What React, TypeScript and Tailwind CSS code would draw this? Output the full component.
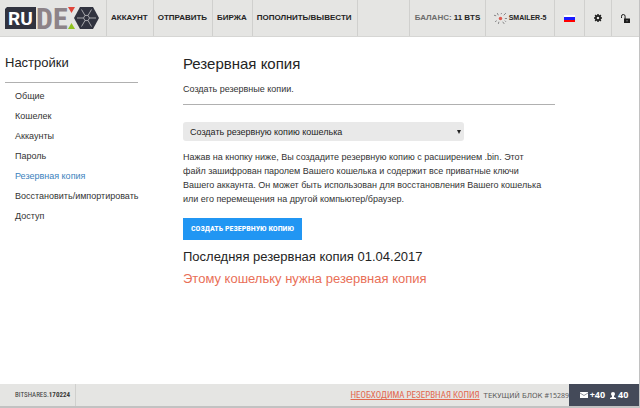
import { useState } from "react";

const NAV_LINKS = ["АККАУНТ", "ОТПРАВИТЬ", "БИРЖА", "ПОПОЛНИТЬ/ВЫВЕСТИ"];

const SETTINGS = [
  "Общие",
  "Кошелек",
  "Аккаунты",
  "Пароль",
  "Резервная копия",
  "Восстановить/импортировать",
  "Доступ",
];

function Logo() {
  return (
    <svg className="overflow-visible" width="94" height="24" viewBox="0 0 94 24" role="img" aria-label="RUDEX">
      <path d="M2 1h29v22H0V3z" fill="#31333f" />
      <text x="3" y="19" fontFamily="Roboto, sans-serif" fontWeight="700" fontSize="19" fill="#fff">
        RU
      </text>
      <text
        x="31"
        y="23"
        fontFamily="'Roboto Condensed', 'Liberation Sans Narrow', sans-serif"
        fontWeight="700"
        fontSize="30"
        fill="#8d8388"
      >
        DE
      </text>
      <path d="M63 1h7l-3.500 6z" fill="#e0453a" />
      <path d="M63 23h7l-3.500-6z" fill="#8fc31f" />
      <path d="M69 12l6-11h13l6 11-6 11H75z" fill="#31333f" />
      <g stroke="#b4b4b8" strokeWidth=".9" fill="none">
        <path d="M72 12h6.500M84.500 12h6.500M76.500 3.500l3.500 6M86.500 3.500l-3.500 6M76.500 20.500l3.500-6M86.500 20.500l-3.500-6" />
        <path d="M80 9.400h3l1.500 2.600-1.500 2.600h-3l-1.500-2.600z" />
      </g>
    </svg>
  );
}

function Avatar() {
  return (
    <svg width="13" height="13" viewBox="0 0 12 12" aria-hidden="true">
      <circle cx="6" cy="6" r="1.600" fill="#dd5a50" />
      <g stroke="#77777a" strokeWidth=".8">
        <path d="M3 1l1 2M7 1l-.5 1M11 1L9 3M0 3l2 .5M12 6h-2M1 9l1.500-1M4 11l.5-2M8 9l1.500 2M10 8l1 1" />
      </g>
    </svg>
  );
}

function Gear() {
  return (
    <svg width="8" height="8" viewBox="0 0 16 16" aria-hidden="true">
      <circle cx="8" cy="8" r="4.300" fill="none" stroke="#1c1c1c" strokeWidth="3.400" />
      <path
        d="M8 0v3M8 13v3M0 8h3M13 8h3M2.300 2.300l2.200 2.200M11.500 11.500l2.200 2.200M2.300 13.700l2.200-2.200M11.500 4.500l2.200-2.200"
        stroke="#1c1c1c"
        strokeWidth="3"
      />
    </svg>
  );
}

function Unlock() {
  return (
    <svg width="9" height="9" viewBox="0 0 9 9" aria-hidden="true">
      <path d="M.5 4V2.300a1.800 1.800 0 0 1 3.600 0V5" fill="none" stroke="#1c1c1c" strokeWidth="1" />
      <path d="M3 4.500h6V9H3z" fill="#1c1c1c" />
      <path d="M6 6v1.500" stroke="#85858a" strokeWidth="1" />
    </svg>
  );
}

function Flag() {
  return (
    <svg width="11" height="7" viewBox="0 0 11 7" aria-hidden="true">
      <path d="M0 0h11v2H0z" fill="#fff" />
      <path d="M0 2h11v3H0z" fill="#1a1aff" />
      <path d="M0 5h11v2H0z" fill="#f00" />
    </svg>
  );
}

function Header() {
  return (
    <header className="flex h-[37px] border-b border-[#d6d6d4] bg-[#e5e5e3] text-[8px] font-bold text-[#242424]">
      <a href="#home" className="flex w-[107px] items-center border-r border-[#d0d0ce] pl-[5px]">
        <Logo />
      </a>
      <nav className="flex">
        {NAV_LINKS.map((label) => (
          <a key={label} href="#nav" className="flex items-center border-r border-[#d0d0ce] pl-1 pr-[5px]">
            {label}
          </a>
        ))}
      </nav>
      <div className="ml-auto flex">
        <div className="flex w-[77px] items-center justify-center gap-[2px] whitespace-nowrap border-x border-[#d0d0ce]">
          <span className="text-[#6c6c6c]">БАЛАНС:</span>
          <span>11 BTS</span>
        </div>
        <button className="flex w-[69px] items-center justify-center gap-[2px] whitespace-nowrap border-r border-[#d0d0ce] text-[7px]">
          <Avatar />
          SMAILER-5
        </button>
        <button aria-label="Язык" className="flex w-[30px] items-center justify-center border-r border-[#d0d0ce]">
          <Flag />
        </button>
        <button aria-label="Настройки" className="flex w-[27px] items-center justify-center border-r border-[#d0d0ce]">
          <Gear />
        </button>
        <button aria-label="Разблокировать" className="flex w-[27px] items-center justify-center">
          <Unlock />
        </button>
      </div>
    </header>
  );
}

function Sidebar({ active, onSelect }: { active: string; onSelect: (name: string) => void }) {
  return (
    <aside className="w-[133px] shrink-0 pt-4">
      <h2 className="text-[13px] leading-5">Настройки</h2>
      <hr className="mt-[9px] border-[#b0b0b0]" />
      <ul className="mt-[3px] pl-[10px] text-[9px] leading-5">
        {SETTINGS.map((name) => (
          <li key={name}>
            <a
              href="#settings"
              onClick={() => onSelect(name)}
              className={`block whitespace-nowrap ${name === active ? "text-[#3b82bd]" : "text-[#333333]"}`}
            >
              {name}
            </a>
          </li>
        ))}
      </ul>
    </aside>
  );
}

function Backup() {
  return (
    <main className="ml-[45px] mr-[84px] flex-1 pt-[15px]">
      <h1 className="text-[15px] leading-6">Резервная копия</h1>
      <p className="mt-[6px] text-[9px] leading-[14px] text-[#333333]">Создать резервные копии.</p>
      <hr className="mt-2 border-[#b0b0b0]" />
      <div className="relative mt-[17px] w-[281px] max-w-full">
        <select
          aria-label="Действие"
          className="block h-[19px] w-full appearance-none rounded-[3px] bg-[#e9e9e9] px-[7px] text-[9px] leading-[14px]"
        >
          <option>Создать резервную копию кошелька</option>
          <option>Создать резервную копию ключа</option>
        </select>
        <svg className="pointer-events-none absolute right-[3px] top-2" width="4" height="4" viewBox="0 0 4 4">
          <path d="M0 0h4L2 4z" fill="#222" />
        </svg>
      </div>
      <p className="mt-[9px] max-w-[362px] text-[9px] leading-[14px] text-[#333333]">
        Нажав на кнопку ниже, Вы создадите резервную копию с расширением .bin. Этот файл зашифрован паролем Вашего
        кошелька и содержит все приватные ключи Вашего аккаунта. Он может быть использован для восстановления Вашего
        кошелька или его перемещения на другой компьютер/браузер.
      </p>
      <button className="mt-3 block h-[22px] bg-[#2196f3] px-2 font-['Roboto_Condensed','Liberation_Sans_Narrow',sans-serif] text-[8px] font-bold text-white">
        СОЗДАТЬ РЕЗЕРВНУЮ КОПИЮ
      </button>
      <h3 className="mt-[6px] text-[13px] leading-[22px]">Последняя резервная копия 01.04.2017</h3>
      <h3 className="text-[13px] leading-[22px] text-[#e96f57]">Этому кошельку нужна резервная копия</h3>
    </main>
  );
}

function Footer() {
  return (
    <footer className="flex h-[24px] border-b-2 border-[#c2c2c2] bg-[#e5e5e3] font-['Roboto_Condensed','Liberation_Sans_Narrow',sans-serif]">
      <div className="flex w-[76px] items-center border-r border-[#d0d0ce] pl-[15px] text-[7px] text-[#3a3a3a]">
        BITSHARES.<b>170224</b>
      </div>
      <div className="ml-auto flex items-center whitespace-nowrap pt-[2px]">
        <a href="#backup" className="text-[9px] text-[#e2684f] underline">
          НЕОБХОДИМА РЕЗЕРВНАЯ КОПИЯ
        </a>
        <span className="ml-1 flex items-center gap-[2px] font-['DejaVu_Sans',sans-serif] text-[7px] text-[#5a5a5a]">
          ТЕКУЩИЙ БЛОК <span className="font-['Noto_Sans',sans-serif]">#15289</span>
        </span>
      </div>
      <div className="flex w-[70px] items-center justify-center gap-[5px] bg-[#444a59] font-['Open_Sans',sans-serif] text-[9px] font-bold text-white">
        <span className="flex items-center gap-[2px]">
          <svg width="8" height="6" viewBox="0 0 8 6" aria-hidden="true">
            <path d="M0 0h8v6H0z" fill="#fff" />
            <path d="M0 1l4 2.500L8 1" fill="none" stroke="#444a59" strokeWidth=".6" />
          </svg>
          +40
        </span>
        <span className="flex items-center gap-[2px]">
          <svg width="6" height="7" viewBox="0 0 6 7" aria-hidden="true">
            <circle cx="3" cy="2" r="2" fill="#fff" />
            <path d="M2 3h2v2l2 1v1H0V6l2-1z" fill="#fff" />
          </svg>
          40
        </span>
      </div>
    </footer>
  );
}

export default function App() {
  const [active, setActive] = useState("Резервная копия");

  return (
    <div className="flex min-h-screen flex-col border-r border-[#c2c2c2] bg-white font-['Liberation_Sans',Arial,sans-serif] text-[#242424]">
      <Header />
      <div className="flex flex-1 pl-[5px]">
        <Sidebar active={active} onSelect={setActive} />
        <Backup />
      </div>
      <Footer />
    </div>
  );
}
